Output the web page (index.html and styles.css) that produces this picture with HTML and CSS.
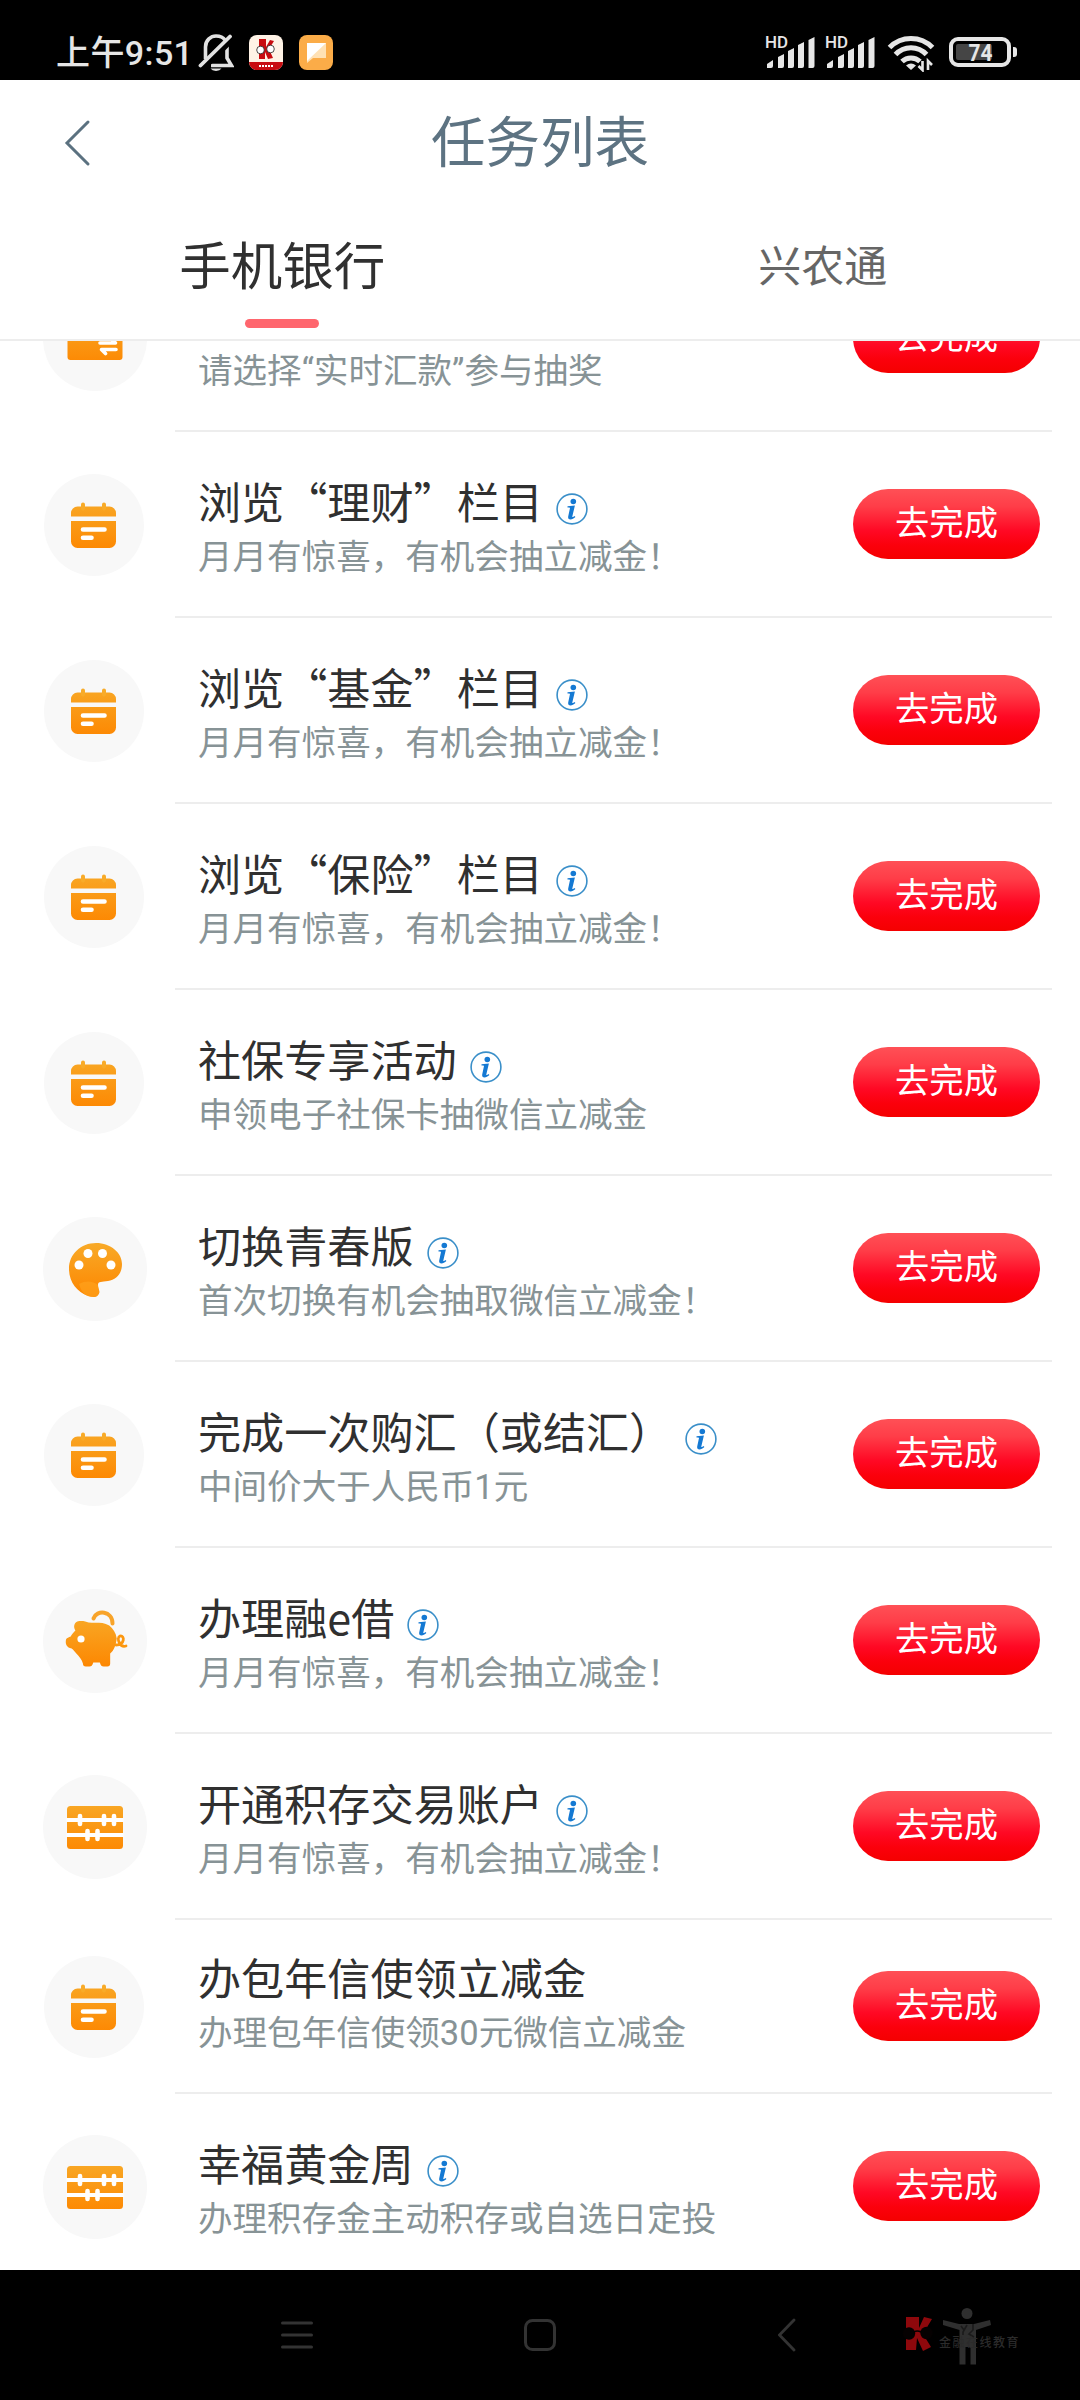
FILE: index.html
```html
<!DOCTYPE html>
<html lang="zh-CN">
<head>
<meta charset="utf-8">
<title>任务列表</title>
<link rel="stylesheet" href="styles.css">
</head>
<body>
<svg class="sprite" width="0" height="0" aria-hidden="true">
  <defs>
    <linearGradient id="amber" gradientUnits="userSpaceOnUse" x1="0" y1="24" x2="0" y2="80">
      <stop offset="0" stop-color="#f8ab29"/><stop offset="1" stop-color="#fd8600"/>
    </linearGradient>
    <symbol id="calendar" viewBox="0 0 104 104">
      <ellipse cx="51" cy="52" rx="50" ry="51" fill="#f8f8f8"/>
      <path d="M34.500 33.500h32a6.500 6.500 0 0 1 6.500 6.500v3.500H28V40a6.500 6.500 0 0 1 6.500-6.500zM28 48h45v20.500a6.500 6.500 0 0 1-6.500 6.500h-32a6.500 6.500 0 0 1-6.500-6.500z" fill="url(#amber)"/>
      <path d="M40 31.500v4M61 31.500v4" stroke="#f8ab29" stroke-width="4" stroke-linecap="round"/>
      <path d="M40 56.500h21.500M40 64.700h8.500" stroke="#fff" stroke-width="4.600" stroke-linecap="round"/>
    </symbol>
    <symbol id="transfer" viewBox="0 0 104 104">
      <circle cx="52" cy="52" r="52" fill="#f8f8f8"/>
      <rect x="24.500" y="33" width="55" height="40" rx="3" fill="url(#amber)"/>
      <path d="M57 56h15.500l-4-4M73 62.500H58.500l4 4" fill="none" stroke="#fff" stroke-width="3.600" stroke-linecap="round" stroke-linejoin="round"/>
    </symbol>
    <symbol id="palette" viewBox="0 0 104 104">
      <circle cx="52" cy="52" r="52" fill="#f8f8f8"/>
      <path d="M53 26c15 0 26 10 26 21 0 10-6 16-14 17-6 1-10 0-10 4 0 4 3 7 0 10-2 3-6 2-10 1C34 75 26 65 26 52c0-15 12-26 27-26z" fill="url(#amber)"/>
      <path d="M36 67c7-4 14-3 19 1 0 4 3 7 0 10-2 3-6 2-10 1-5-2-7-6-9-12z" fill="#ffa51f" opacity=".6"/>
      <g fill="#fff"><circle cx="36" cy="48" r="4.500"/><circle cx="45" cy="36.500" r="4.500"/><circle cx="59.500" cy="36.500" r="4.500"/><circle cx="68" cy="48" r="4.500"/></g>
    </symbol>
    <symbol id="piggy" viewBox="0 0 104 104">
      <circle cx="52" cy="52" r="52" fill="#f8f8f8"/>
      <path transform="translate(4.200 -.500) scale(.94 1)" d="M32 33c5-1 9 0 12 1 7 1 15-1 22 3 4 3 7 7 8 13-1 7-3 12-7 15v10c0 2-1 3-3 3h-4c-2 0-3-1-4-4H49c-1 3-2 4-4 4h-4c-2 0-3-1-3-3-1-4-4-7-7-10-2-2-3-4-5-5-5-1-7-4-6-9 1-2 3-2 5-3 1-2 3-4 5-6-2-3-2-7 2-9z" fill="url(#amber)"/>
      <circle cx="38" cy="50" r="3.600" fill="#fff"/>
      <path d="M50.500 29.500c3-9 19-8 19 5" fill="none" stroke="#f8a42a" stroke-width="4" stroke-linecap="round"/>
      <path d="M73 56c9 0 9-10 4-9-4 2 0 12 6 10" fill="none" stroke="#fc970f" stroke-width="2.800" stroke-linecap="round"/>
    </symbol>
    <symbol id="abacus" viewBox="0 0 104 104">
      <circle cx="52" cy="52" r="52" fill="#f8f8f8"/>
      <rect x="24" y="31" width="56" height="43" rx="3.500" fill="url(#amber)"/>
      <path d="M23.500 45h57M23.500 60h57" stroke="#fff" stroke-width="3.800"/>
      <path d="M37 41v8M61 41v8M71 41v8M44.500 56v8M54.500 56v8" stroke="#fff" stroke-width="4.600" stroke-linecap="round"/>
    </symbol>
    <symbol id="info" viewBox="0 0 32 32">
      <circle cx="16" cy="16" r="14.900" fill="#fff" stroke="#3a8fc9" stroke-width="1.600"/>
      <circle cx="17.300" cy="8.500" r="2.800" fill="#1479d3"/>
      <path d="M11.500 13.200l7.400-.7-2.600 11c-.1.800.5.900 2.300-.4l.8.900c-3.300 3.500-8 3.200-7.200-.5L14 15c-.5-.5-1.400-.5-2.500-.4z" fill="#1479d3"/>
    </symbol>
  </defs>
</svg>

<div class="screen">
  <header class="status">
    <span class="clock">上午9:51</span>
    <svg class="bell" width="36" height="40" viewBox="0 0 36 40">
      <path d="M29 14v12l4.500 7.500H13M7.500 27V15C7.500 8 13 4 18 4s7 1 9 4" fill="none" stroke="#e2e2e2" stroke-width="3.600"/>
      <path d="M6 37L35 8" stroke="#000" stroke-width="3.500"/>
      <path d="M2.500 33.500L32 4.500" stroke="#e2e2e2" stroke-width="3.800" stroke-linecap="round"/>
      <path d="M12.500 36.500h11a6 4 0 0 1-11 0z" fill="#e2e2e2"/>
    </svg>
    <svg class="app" width="34" height="35" viewBox="0 0 34 35">
      <rect width="34" height="35" rx="8" fill="#fff3e6"/>
      <path d="M0 27h34a8 8 0 0 1-8 8H8a8 8 0 0 1-8-8z" fill="#c80c10"/>
      <path d="M10 4h7v8l4-7 4 1-5 8 4 9-5 1-3-7v7h-6z" fill="#c80c10"/>
      <circle cx="11.500" cy="15" r="3.800" fill="#fff" stroke="#222" stroke-width=".8"/><circle cx="21.500" cy="14" r="3.800" fill="#fff" stroke="#222" stroke-width=".8"/>
      <path d="M10 31h14" stroke="#fff" stroke-width="2" stroke-dasharray="2 1"/>
    </svg>
    <svg class="app second" width="34" height="35" viewBox="0 0 34 35">
      <rect width="34" height="35" rx="8" fill="#fbac48"/>
      <path d="M8 8h19v15H14l-6 5z" fill="#ffe1b4"/><path d="M8 8h19L8 26z" fill="#fff"/>
    </svg>
    <svg class="system" width="256" height="40" viewBox="0 0 256 40">
      <g id="sim" fill="#e6e6e6">
        <text class="hd" x="0" y="16.200" textLength="23" lengthAdjust="spacingAndGlyphs">HD</text>
        <path d="M2 36v-4l6-4v6a2 2 0 0 1-2 2zM13 36V25l6-3v12a2 2 0 0 1-2 2h-4zM23 36V19l6-3v18a2 2 0 0 1-2 2h-4zM33 36V13l6-3v24a2 2 0 0 1-2 2h-4zM43.500 36V8l6-3v29a2 2 0 0 1-2 2h-4z"/>
      </g>
      <use href="#sim" x="60"/>
      <g fill="none" stroke="#e6e6e6" stroke-width="5">
        <path d="M124.500 15.500a30 30 0 0 1 43 0M130.500 22.500a21 21 0 0 1 31 0M137 29.500a13 13 0 0 1 18 0"/>
      </g>
      <path d="M141 33.500q5-4 10 0l-5 4.500z" fill="#e6e6e6"/>
      <path d="M157.500 29v9l-4-4M163 38v-9l4 4" fill="none" stroke="#e6e6e6" stroke-width="2.600"/>
      <rect x="186" y="7" width="58" height="26" rx="7" fill="none" stroke="#e6e6e6" stroke-width="4"/>
      <rect x="191" y="12" width="36" height="16" rx="2" fill="#454545"/>
      <text class="level" x="203.500" y="28.500" textLength="24" lengthAdjust="spacingAndGlyphs">74</text>
      <path d="M248 15h1a3 3 0 0 1 3 3v4a3 3 0 0 1-3 3h-1z" fill="#e6e6e6"/>
    </svg>
  </header>

  <div class="titlebar">
    <svg class="back" width="28" height="48" viewBox="0 0 28 48"><path d="M25 3L4 24l21 21" fill="none" stroke="#5b7180" stroke-width="3" stroke-linecap="round"/></svg>
    <h1>任务列表</h1>
  </div>

  <nav class="tabs">
    <div class="tab active">手机银行</div>
    <div class="tab">兴农通</div>
  </nav>

  <main class="list">
    <article class="row">
      <svg class="icon"><use href="#transfer"/></svg>
      <div class="body"><div class="text"><div class="name"></div><div class="desc">请选择“实时汇款”参与抽奖</div></div><button>去完成</button></div>
    </article>
    <article class="row">
      <svg class="icon"><use href="#calendar"/></svg>
      <div class="body"><div class="text"><div class="name">浏览“理财”栏目<svg class="info"><use href="#info"/></svg></div><div class="desc">月月有惊喜，有机会抽立减金！</div></div><button>去完成</button></div>
    </article>
    <article class="row">
      <svg class="icon"><use href="#calendar"/></svg>
      <div class="body"><div class="text"><div class="name">浏览“基金”栏目<svg class="info"><use href="#info"/></svg></div><div class="desc">月月有惊喜，有机会抽立减金！</div></div><button>去完成</button></div>
    </article>
    <article class="row">
      <svg class="icon"><use href="#calendar"/></svg>
      <div class="body"><div class="text"><div class="name">浏览“保险”栏目<svg class="info"><use href="#info"/></svg></div><div class="desc">月月有惊喜，有机会抽立减金！</div></div><button>去完成</button></div>
    </article>
    <article class="row">
      <svg class="icon"><use href="#calendar"/></svg>
      <div class="body"><div class="text"><div class="name">社保专享活动<svg class="info"><use href="#info"/></svg></div><div class="desc">申领电子社保卡抽微信立减金</div></div><button>去完成</button></div>
    </article>
    <article class="row">
      <svg class="icon"><use href="#palette"/></svg>
      <div class="body"><div class="text"><div class="name">切换青春版<svg class="info"><use href="#info"/></svg></div><div class="desc">首次切换有机会抽取微信立减金！</div></div><button>去完成</button></div>
    </article>
    <article class="row">
      <svg class="icon"><use href="#calendar"/></svg>
      <div class="body"><div class="text"><div class="name">完成一次购汇（或结汇）<svg class="info"><use href="#info"/></svg></div><div class="desc">中间价大于人民币1元</div></div><button>去完成</button></div>
    </article>
    <article class="row">
      <svg class="icon"><use href="#piggy"/></svg>
      <div class="body"><div class="text"><div class="name">办理融e借<svg class="info"><use href="#info"/></svg></div><div class="desc">月月有惊喜，有机会抽立减金！</div></div><button>去完成</button></div>
    </article>
    <article class="row">
      <svg class="icon"><use href="#abacus"/></svg>
      <div class="body"><div class="text"><div class="name">开通积存交易账户<svg class="info"><use href="#info"/></svg></div><div class="desc">月月有惊喜，有机会抽立减金！</div></div><button>去完成</button></div>
    </article>
    <article class="row plain">
      <svg class="icon"><use href="#calendar"/></svg>
      <div class="body"><div class="text"><div class="name">办包年信使领立减金</div><div class="desc">办理包年信使领30元微信立减金</div></div><button>去完成</button></div>
    </article>
    <article class="row">
      <svg class="icon"><use href="#abacus"/></svg>
      <div class="body"><div class="text"><div class="name">幸福黄金周<svg class="info"><use href="#info"/></svg></div><div class="desc">办理积存金主动积存或自选日定投</div></div><button>去完成</button></div>
    </article>
  </main>

  <footer class="sysnav">
    <svg class="menu" width="32" height="32" viewBox="0 0 32 32"><path d="M1.500 4h29M1.500 16h29M1.500 28h29" stroke="#333" stroke-width="3" stroke-linecap="round"/></svg>
    <svg class="home" width="32" height="32" viewBox="0 0 32 32"><rect x="1.500" y="1.500" width="29" height="29" rx="7" fill="none" stroke="#333" stroke-width="3"/></svg>
    <svg class="prev" width="20" height="34" viewBox="0 0 20 34"><path d="M16 2L1.500 17 16 32" fill="none" stroke="#333" stroke-width="2.800" stroke-linecap="round"/></svg>
    <svg class="mark" width="130" height="70" viewBox="0 0 130 70">
      <path d="M6 11h13v11l5-11 8 2-9 15 8 13-8 4-6-13-1 12H6z" fill="#8e080c"/>
      <circle cx="9" cy="27.500" r="6.200" fill="#050101"/><circle cx="26.500" cy="27" r="6.200" fill="#050101"/>
      <path d="M14 26q3-2 7 0" fill="none" stroke="#050101" stroke-width="1.500"/>
      <g fill="#333" fill-opacity=".92"><circle cx="67" cy="7.500" r="5.500"/>
      <path d="M43 14l16 4h15l16-4 1 5-15 5v34.500h-5.500V41h-5v17.500h-6V24L43 19z"/></g>
      <path d="M61 20l3 4M67 19l-4 7v3M73 18v6l-4 4 5 3" fill="none" stroke="#1b1b1b" stroke-width="1.600"/>
      <text class="caption" x="39" y="41">金融在线教育</text>
    </svg>
  </footer>
</div>
</body>
</html>
```

FILE: styles.css
```css
* { box-sizing: border-box; }
body { margin: 0; background: #fff; font-family: "Noto Sans CJK SC", sans-serif; }
svg { display: block; flex: none; }
.sprite { position: absolute; }
.screen { width: 1080px; height: 2400px; display: flex; flex-direction: column; overflow: hidden; }

.status { height: 80px; background: #000; display: flex; flex: none; align-items: flex-start; padding: 32px 0 0 56px; }
.clock { width: 142px; padding-top: 1px; color: #e6e6e6; font: 500 34px/40px Roboto, "Noto Sans CJK SC", sans-serif; white-space: nowrap; letter-spacing: .4px; }
.app { margin: 3px 0 0 15px; }
.app.second { margin-left: 16px; }
.system { margin-left: 432px; }
.hd { font: 500 16px Roboto, sans-serif; }
.level { font: 700 23px Roboto, sans-serif; fill: #e6e6e6; }

.titlebar { height: 122px; flex: none; display: grid; grid-template-columns: 150px 1fr 150px; align-items: center; padding-bottom: 4px; }
.back { margin: 7px 0 0 63px; }
h1 { margin: 0; text-align: center; font-size: 54.500px; line-height: 70px; font-weight: 400; color: #5d7382; }

.tabs { height: 139px; flex: none; display: flex; border-bottom: 2px solid #ededed; padding: 25px 0 0 25px; }
.tab { width: 515px; text-align: center; color: #666; font-size: 43px; line-height: 72px; }
.tab + .tab { margin-left: 26px; }
.tab.active { color: #303030; font-size: 51.500px; }
.tab.active::after { content: ""; display: block; width: 74px; height: 9px; margin: 20px auto 0; border-radius: 5px; background: #ff666e; }

.list { height: 1929px; flex: none; overflow: hidden; }
.row { display: flex; height: 186px; padding-right: 28px; }
.row:first-child { margin-top: -95px; }
.icon { width: 104px; height: 104px; margin: 41px 28px 0 43px; }
.body { flex: 1; display: flex; justify-content: space-between; border-bottom: 2px solid #ededed; padding: 38px 12px 0 23px; }
.name { display: flex; align-items: center; height: 60px; font-size: 43.120px; line-height: 60px; color: #303030; white-space: nowrap; }
.info { width: 32px; height: 32px; margin: 18px 0 0 13px; }
.desc { margin-top: 3px; font: 34.550px/48px Roboto, "Noto Sans CJK SC", sans-serif; color: #879396; white-space: nowrap; }
button { width: 187px; height: 70px; margin-top: 19px; padding: 0 0 8px; border: 0; border-radius: 38px; color: #fff; font: 34.300px/62px "Noto Sans CJK SC", sans-serif; background: linear-gradient(#ff5056 0%, #ff3d48 25%, #ff0824 60%, #fb000c 80%, #f40000 100%); }
.plain { height: 174px; }
.plain .icon { margin-top: 35px; }
.plain .body { padding-top: 26px; }
.plain button { margin-top: 25px; }

.sysnav { height: 130px; flex: none; background: #000; display: flex; align-items: flex-start; padding-top: 49px; }
.menu { margin-left: 281px; }
.home { margin-left: 211px; }
.prev { margin: -1px 0 0 222px; }
.mark { margin: -13px 0 0 102px; }
.caption { font: 500 12px "Noto Sans CJK SC", sans-serif; letter-spacing: 1.500px; fill: #2b2b2b; }
```
